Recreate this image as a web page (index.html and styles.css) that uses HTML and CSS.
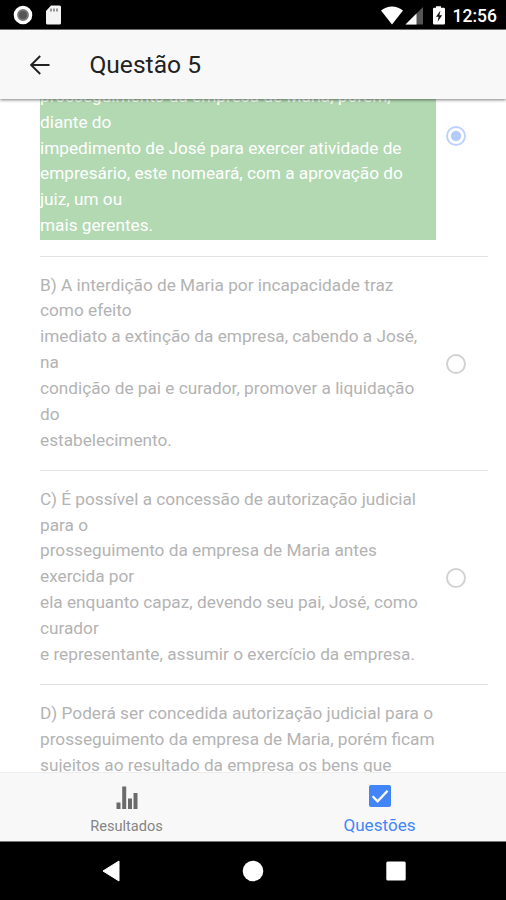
FILE: index.html
```
<!DOCTYPE html>
<html lang="pt-BR">
<head>
  <meta charset="UTF-8" />
  <meta name="viewport" content="width=device-width, initial-scale=1" />
  <title>Questão 5</title>
  <link rel="stylesheet" href="styles.css">
</head>
<body>
  <div class="status-bar">
    <svg class="status-left" width="48" height="22" viewBox="0 0 48 22">
      <circle cx="10" cy="11" r="7.6" fill="#777" stroke="#fff" stroke-width="3.4" />
      <circle cx="10" cy="11" r="4" fill="#555" />
      <path d="M38 1.5h8.5a1.5 1.5 0 0 1 1.5 1.5v16a1.5 1.5 0 0 1-1.5 1.5h-12a1.5 1.5 0 0 1-1.5-1.5V7z" fill="#f4f4f4" />
      <path d="M38 4.5v3M41 4.5v3M44 4.5v3" stroke="#666" stroke-width="1.3" />
    </svg>
    <div class="status-right">
      <svg width="64" height="20" viewBox="0 0 64 20">
        <path d="M0 4.5Q11 -3.5 22 4.5L11 18.5z" fill="#fff" />
        <path d="M42 1v17.5H24.5z" fill="#555" />
        <path d="M35.500 7.5v11H24.5z" fill="#fff" />
        <path d="M55 .2h5v1.500h2.800q1.200 0 1.200 1.200v14.300q0 1.300-1.200 1.300H53.200q-1.200 0-1.200-1.300V2.900q0-1.200 1.200-1.200H55z" fill="#fff" />
        <path d="M59.500 4.500l-4.500 6.200h2.600l-1 5 4.600-6.400h-2.800z" fill="#111" />
      </svg>
      <span class="clock">12:56</span>
    </div>
  </div>

  <header class="toolbar">
    <svg class="back" width="20" height="20" viewBox="0 0 20 20">
      <path d="M19.5 10H1.3M10.2 1L1.2 10l9 9" fill="none" stroke="#222" stroke-width="1.9" />
    </svg>
    <h1 class="title">Questão 5</h1>
  </header>

  <main class="content">
    <div class="list">
      <div class="item first">
        <div class="answer correct">prosseguimento da empresa de Maria, porém,<br>diante do<br>impedimento de José para exercer atividade de<br>empresário, este nomeará, com a aprovação do<br>juiz, um ou<br>mais gerentes.</div>
        <span class="radio checked"></span>
      </div>
      <div class="item">
        <div class="answer">B) A interdição de Maria por incapacidade traz<br>como efeito<br>imediato a extinção da empresa, cabendo a José,<br>na<br>condição de pai e curador, promover a liquidação<br>do<br>estabelecimento.</div>
        <span class="radio"></span>
      </div>
      <div class="item">
        <div class="answer">C) É possível a concessão de autorização judicial<br>para o<br>prosseguimento da empresa de Maria antes<br>exercida por<br>ela enquanto capaz, devendo seu pai, José, como<br>curador<br>e representante, assumir o exercício da empresa.</div>
        <span class="radio"></span>
      </div>
      <div class="item">
        <div class="answer">D) Poderá ser concedida autorização judicial para o<br>prosseguimento da empresa de Maria, porém ficam<br>sujeitos ao resultado da empresa os bens que</div>
      </div>
    </div>
  </main>

  <nav class="tabs">
    <div class="tab">
      <svg width="22" height="24" viewBox="0 0 22 24">
        <path d="M.5 17.5h4V24h-4zM6.200 1.5h4V24h-4zM12 13.5h4V24h-4zM17.5 8h4v16h-4z" fill="#6b6b6b" />
      </svg>
      <span class="tab-label">Resultados</span>
    </div>
    <div class="tab active">
      <svg width="22" height="22" viewBox="0 0 22 22">
        <rect width="22" height="22" rx="2" fill="#4285f8" />
        <path d="M3.6 11.3l5 5L18.6 5.8" fill="none" stroke="#fff" stroke-width="2.3" />
      </svg>
      <span class="tab-label">Questões</span>
    </div>
  </nav>

  <div class="nav-bar">
    <svg width="18" height="22" viewBox="0 0 18 22"><path d="M17 1v20L1 11z" fill="#fff" stroke="#fff" stroke-linejoin="round" /></svg>
    <svg width="22" height="22" viewBox="0 0 22 22"><circle cx="11" cy="11" r="10.3" fill="#fff" /></svg>
    <svg width="20" height="20" viewBox="0 0 20 20"><rect x=".3" y=".5" width="19.4" height="19" rx="1.5" fill="#fff" /></svg>
  </div>
</body>
</html>
```
FILE: styles.css
```
* {
  box-sizing: border-box;
}
body {
  margin: 0;
  height: 900px;
  display: flex;
  flex-direction: column;
  overflow: hidden;
  background-color: #fff;
  font-family: Roboto, sans-serif;
}
.status-bar {
  flex: none;
  height: 30px;
  padding: 0 9px 0 13px;
  display: flex;
  justify-content: space-between;
  background-color: #000;
  border-bottom: 1px solid #777;
}
.status-left {
  margin-top: 4px;
}
.status-right {
  display: flex;
  align-items: flex-start;
  gap: 8px;
  padding-top: 6px;
}
.clock {
  color: #fff;
  font-size: 17.5px;
  font-weight: 500;
  line-height: 20px;
}
.toolbar {
  flex: none;
  height: 69px;
  padding: 0 30px;
  display: flex;
  align-items: center;
  gap: 39.4px;
  background-color: #f8f8f8;
  box-shadow: 0 1px 3px rgba(0, 0, 0, 0.5);
  z-index: 1;
}
.title {
  margin: 0;
  font-size: 24.6px;
  font-weight: 400;
  color: #222;
}
.content {
  flex: 1;
  min-height: 0;
  overflow: hidden;
}
.list {
  margin: -67px 0 0 40px;
}
.item {
  display: flex;
  align-items: center;
  margin-right: 18px;
  padding: 15.6px 0 16.8px;
  border-bottom: 1px solid #e3e3e3;
}
.item.first {
  padding: 0 0 16px;
}
.answer {
  width: 396px;
  font-size: 17.23px;
  line-height: 25.83px;
  color: #b3b3b3;
  white-space: nowrap;
}
.correct {
  padding: 52px 0 1px;
  background-color: #b2d9b2;
  color: #fff;
}
.radio {
  width: 20px;
  height: 20px;
  margin: 2px 0 0 10px;
  border: 2px solid #d2d2d2;
  border-radius: 50%;
}
.radio.checked {
  margin-top: 1px;
  border-color: #bdd3fd;
  background: radial-gradient(circle, #b3ccfd 4.7px, #fff 5.5px);
}
.tabs {
  flex: none;
  height: 69px;
  display: flex;
  background-color: #f8f8f8;
  border-top: 1px solid #eee;
}
.tab {
  flex: 1;
  display: flex;
  flex-direction: column;
  align-items: center;
  padding-top: 12px;
  color: #858585;
}
.tab-label {
  margin-top: 8px;
  font-size: 14.6px;
  line-height: 18px;
}
.tab.active {
  color: #4285f8;
}
.tab.active .tab-label {
  font-size: 17.1px;
  line-height: 20px;
}
.nav-bar {
  flex: none;
  height: 59px;
  padding: 0 100px 0 102px;
  display: flex;
  justify-content: space-between;
  align-items: center;
  background-color: #000;
  border-top: 1px solid #777;
}
```
